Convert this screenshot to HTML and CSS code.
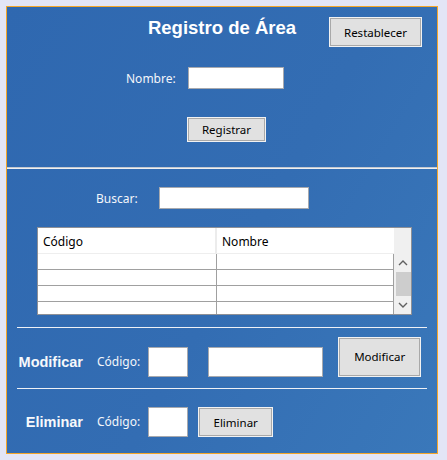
FILE: index.html
```html
<!DOCTYPE html>
<html lang="es">
<head>
<meta charset="utf-8">
<title>Registro de Área</title>
<link rel="stylesheet" href="styles.css">
</head>
<body>
<div class="frame">
  <section class="sec-registro">
    <div class="head">
      <h1 class="title">Registro de Área</h1>
      <button class="btn btn-reset">Restablecer</button>
    </div>
    <div class="row row-nombre">
      <label class="lbl">Nombre:</label>
      <input class="inp inp-nombre" type="text">
    </div>
    <button class="btn btn-registrar">Registrar</button>
  </section>
  <div class="divider"></div>
  <section class="sec-lista">
    <div class="row row-buscar">
      <label class="lbl">Buscar:</label>
      <input class="inp inp-buscar" type="text">
    </div>
    <div class="grid">
      <div class="grid-main">
        <div class="grid-head">
          <div class="hcell hcell-1">Código</div>
          <div class="hcell">Nombre</div>
        </div>
        <div class="grid-row"><div class="cell cell-1"></div><div class="cell"></div></div>
        <div class="grid-row"><div class="cell cell-1"></div><div class="cell"></div></div>
        <div class="grid-row"><div class="cell cell-1"></div><div class="cell"></div></div>
        <div class="grid-row last"><div class="cell cell-1"></div><div class="cell"></div></div>
      </div>
      <div class="scroll">
        <div class="scroll-head"></div>
        <div class="sbtn">
          <svg width="10" height="6" viewBox="0 0 10 6"><path d="M1 5 L5 1 L9 5" fill="none" stroke="#606060" stroke-width="1.4"/></svg>
        </div>
        <div class="thumb"></div>
        <div class="sbtn">
          <svg width="10" height="6" viewBox="0 0 10 6"><path d="M1 1 L5 5 L9 1" fill="none" stroke="#606060" stroke-width="1.4"/></svg>
        </div>
      </div>
    </div>
    <div class="hline"></div>
    <div class="row row-mod">
      <span class="op">Modificar</span>
      <label class="lbl lbl-cod">Código:</label>
      <input class="inp inp-cod" type="text">
      <input class="inp inp-modnombre" type="text">
      <button class="btn btn-modificar">Modificar</button>
    </div>
    <div class="hline hline-2"></div>
    <div class="row row-del">
      <span class="op">Eliminar</span>
      <label class="lbl lbl-cod">Código:</label>
      <input class="inp inp-cod" type="text">
      <button class="btn btn-eliminar">Eliminar</button>
    </div>
  </section>
</div>
</body>
</html>
```

FILE: styles.css
```css
* { box-sizing: border-box; }
html, body { margin: 0; padding: 0; }
body {
  background: #e3e5f6;
  width: 447px;
  height: 460px;
  overflow: hidden;
  padding: 6px 0 0 6px;
  font-family: "Noto Sans", "Open Sans", sans-serif;
}
.frame {
  width: 432px;
  height: 448px;
  border: 1px solid #f4a62a;
  background: linear-gradient(120deg, #2f68b0 0%, #336db3 55%, #3a78ba 100%);
  display: flex;
  flex-direction: column;
}
.sec-registro {
  height: 160px;
  display: flex;
  flex-direction: column;
  padding-top: 10px;
}
.head {
  display: grid;
  grid-template-columns: 1fr auto 1fr;
  height: 30px;
}
.title {
  grid-column: 2;
  margin: 0;
  font-family: "Liberation Sans", Arial, sans-serif;
  font-weight: bold;
  font-size: 18.5px;
  line-height: 22px;
  color: #ffffff;
  align-self: start;
}
.btn-reset {
  grid-column: 3;
  justify-self: end;
  margin-right: 15px;
  width: 93px;
  height: 30px;
}
.btn {
  background: #e1e1e1;
  border: 1px solid #f2f2f2;
  box-shadow: inset 0 0 0 1px #a9a9a9;
  font-family: "Noto Sans", "Open Sans", sans-serif;
  font-size: 11.5px;
  color: #000;
  padding: 0;
  border-radius: 0;
}
.row {
  display: flex;
  align-items: center;
}
.lbl {
  color: #f4f6fa;
  font-size: 12px;
}
.inp {
  background: #fff;
  border: 1px solid #a7a9ae;
  padding: 0;
  margin: 0;
  outline: none;
  border-radius: 0;
}
.row-nombre {
  margin-top: 20px;
  padding-left: 119px;
  height: 22px;
}
.inp-nombre {
  margin-left: 12px;
  width: 96px;
  height: 22px;
}
.btn-registrar {
  margin-top: 28px;
  margin-left: 180px;
  width: 79px;
  height: 25px;
}
.divider {
  height: 2px;
  border-top: 1px solid #c3c8cf;
  border-bottom: 1px solid #eef0f3;
}
.sec-lista {
  display: flex;
  flex-direction: column;
  flex: 1;
}
.row-buscar {
  margin-top: 18px;
  padding-left: 89px;
  height: 22px;
}
.inp-buscar {
  margin-left: 21px;
  width: 150px;
  height: 22px;
}
.grid {
  margin-top: 18px;
  margin-left: 30px;
  width: 375px;
  height: 88px;
  border: 1px solid #8e9096;
  background: #fff;
  display: flex;
}
.grid-main {
  width: 356px;
  display: flex;
  flex-direction: column;
  overflow: hidden;
}
.grid-head {
  height: 26px;
  display: flex;
  border-bottom: 1px solid #eeeeee;
  flex-shrink: 0;
}
.hcell {
  width: 177px;
  padding-left: 5px;
  font-size: 12px;
  line-height: 27px;
  color: #000;
}
.hcell-1 {
  width: 179px;
  border-right: 2px solid #ececec;
}
.grid-row {
  height: 16px;
  display: flex;
  border-bottom: 1px solid #a0a0a0;
  flex-shrink: 0;
}
.grid-row.last { border-bottom: none; }
.cell {
  width: 177px;
  border-right: 1px solid #a0a0a0;
}
.cell-1 { width: 179px; }
.scroll {
  flex: 1;
  background: #f0f0f0;
  display: flex;
  flex-direction: column;
  align-items: center;
}
.scroll-head { height: 26px; flex-shrink: 0; }
.sbtn {
  height: 18px;
  width: 100%;
  display: flex;
  align-items: center;
  justify-content: center;
}
.thumb {
  width: 15px;
  height: 24px;
  background: #cdcdcd;
  margin-left: 1px;
}
.hline {
  margin-top: 12px;
  margin-left: 10px;
  width: 410px;
  height: 1px;
  background: #eef1f6;
}
.hline-2 { margin-top: 11px; }
.op {
  width: 76px;
  text-align: right;
  font-family: "Liberation Sans", Arial, sans-serif;
  font-weight: bold;
  font-size: 14.5px;
  color: #f6f8fb;
  line-height: 30px;
}
.lbl-cod {
  margin-left: 14px;
  line-height: 30px;
}
.inp-cod {
  margin-left: 8px;
  width: 40px;
  height: 30px;
}
.row-mod {
  margin-top: 9px;
  align-items: flex-end;
}
.inp-modnombre {
  margin-left: 20px;
  width: 115px;
  height: 30px;
}
.btn-modificar {
  margin-left: 15px;
  width: 83px;
  height: 40px;
  padding-bottom: 2px;
}
.row-del {
  margin-top: 18px;
}
.btn-eliminar {
  margin-left: 10px;
  width: 75px;
  height: 30px;
}
```
